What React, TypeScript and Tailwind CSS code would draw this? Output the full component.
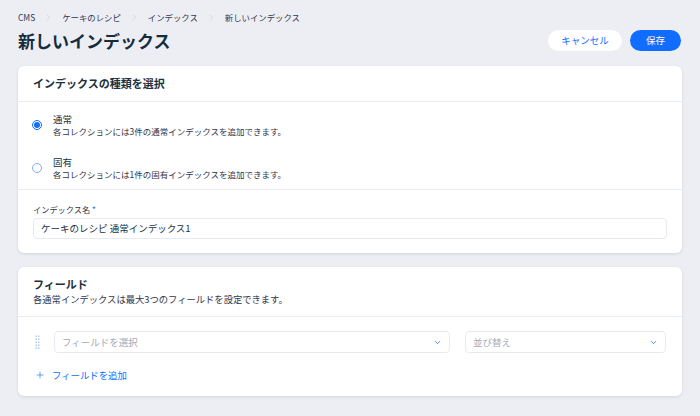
import { Plus, ChevronDown, ChevronRight } from "lucide-react";

const crumbs = ["CMS", "ケーキのレシピ", "インデックス", "新しいインデックス"];

function Radio({ checked }: { checked: boolean }) {
    return (
        <span className={`w-[10px] h-[10px] rounded-full border flex items-center justify-center shrink-0 bg-white ${checked ? "border-[#116dff]" : "border-[#7fb0f5]"}`}>
            {checked && <span className="w-[6px] h-[6px] rounded-full bg-[#116dff]" />}
        </span>
    );
}

function DragHandle() {
    const dots = [0, 1, 2, 3, 4];
    return (
        <svg width="5" height="15" viewBox="0 0 5 15" className="shrink-0">
            {dots.map((i) => (
                <g key={i}>
                    <rect x="0.5" y={0.5 + i * 3} width="1.4" height="1.4" fill="#a9c3ee" />
                    <rect x="3" y={0.5 + i * 3} width="1.4" height="1.4" fill="#a9c3ee" />
                </g>
            ))}
        </svg>
    );
}

function Select({ placeholder, className }: { placeholder: string; className: string }) {
    return (
        <div className={`h-[22px] border border-[#e6ebf3] rounded-[4px] flex items-center justify-between pl-[7px] pr-[7px] ${className}`}>
            <span className="text-[9.5px] text-[#a4a9b8]">{placeholder}</span>
            <ChevronDown className="w-[9px] h-[9px] text-[#116dff]" strokeWidth={2} />
        </div>
    );
}

export default function App() {
    const options = [
        { label: "通常", desc: "各コレクションには3件の通常インデックスを追加できます。", checked: true },
        { label: "固有", desc: "各コレクションには1件の固有インデックスを追加できます。", checked: false },
    ];

    return (
        <div className="min-h-screen bg-[#eceef3] px-[18px] pt-[11px] pb-[20px] text-[#20303c]" style={{ fontFamily: '"Noto Sans CJK JP", "Noto Sans", sans-serif' }}>
            {/* breadcrumb */}
            <div className="h-[12px] flex items-center text-[8.4px] text-[#333853]">
                {crumbs.map((c, i) => (
                    <span key={c} className="flex items-center">
                        {i > 0 && <ChevronRight className="w-[9px] h-[9px] mx-[9px] text-[#c3c7d1]" strokeWidth={1.5} />}
                        <span>{c}</span>
                    </span>
                ))}
            </div>

            <div className="mt-[7px] h-[21px] flex items-center justify-between">
                <h1 className="text-[17px] font-bold leading-none text-[#162d3d]">新しいインデックス</h1>
                <div className="flex gap-[8px] mr-[1px]">
                    <button className="h-[21px] w-[74px] rounded-full bg-white text-[#116dff] text-[9.5px]">キャンセル</button>
                    <button className="h-[21px] w-[51px] rounded-full bg-[#116dff] text-white text-[9.5px]">保存</button>
                </div>
            </div>

            {/* card 1 */}
            <div className="mt-[15px] bg-white rounded-[6px] shadow-[0_1px_3px_rgba(22,45,61,0.12)]">
                <div className="h-[36px] px-[15px] flex items-center border-b border-[#e9ecf2]">
                    <h2 className="text-[11px] font-bold">インデックスの種類を選択</h2>
                </div>
                <div className="pt-[11px] pb-[9px] flex flex-col gap-[19px] border-b border-[#e9ecf2]">
                    {options.map((o) => (
                        <div key={o.label} className="flex items-center pl-[14px]">
                            <Radio checked={o.checked} />
                            <div className="ml-[11px]">
                                <div className="text-[9.5px] leading-[12px] text-[#20303c]">{o.label}</div>
                                <div className="text-[8.5px] leading-[12px] text-[#32364b]">{o.desc}</div>
                            </div>
                        </div>
                    ))}
                </div>
                <div className="px-[15px] pt-[14px] pb-[14px]">
                    <div className="text-[8.2px] leading-[11px] text-[#32364b]">
                        インデックス名 <span className="text-[#116dff]">*</span>
                    </div>
                    <div className="mt-[3px] h-[21px] border border-[#e6ebf3] rounded-[4px] flex items-center px-[7px] text-[9.5px] text-[#20303c]">
                        ケーキのレシピ 通常インデックス1
                    </div>
                </div>
            </div>

            {/* card 2 */}
            <div className="mt-[14px] bg-white rounded-[6px] shadow-[0_1px_3px_rgba(22,45,61,0.12)]">
                <div className="px-[15px] pt-[10px] pb-[11px] border-b border-[#e9ecf2]">
                    <h2 className="text-[11px] leading-[14px] font-bold">フィールド</h2>
                    <p className="mt-[2px] text-[9.3px] leading-[12px] text-[#32364b]">各通常インデックスは最大3つのフィールドを設定できます。</p>
                </div>
                <div className="pl-[17px] pr-[16px] pt-[14px] pb-[15px]">
                    <div className="flex items-center">
                        <DragHandle />
                        <Select placeholder="フィールドを選択" className="ml-[14px] flex-1" />
                        <Select placeholder="並び替え" className="ml-[15px] w-[201px]" />
                    </div>
                    <button className="mt-[16px] flex items-center text-[#116dff] text-[9.4px] leading-[12px]">
                        <Plus className="w-[10px] h-[10px]" strokeWidth={1.5} />
                        <span className="ml-[7px]">フィールドを追加</span>
                    </button>
                </div>
            </div>
        </div>
    );
}
